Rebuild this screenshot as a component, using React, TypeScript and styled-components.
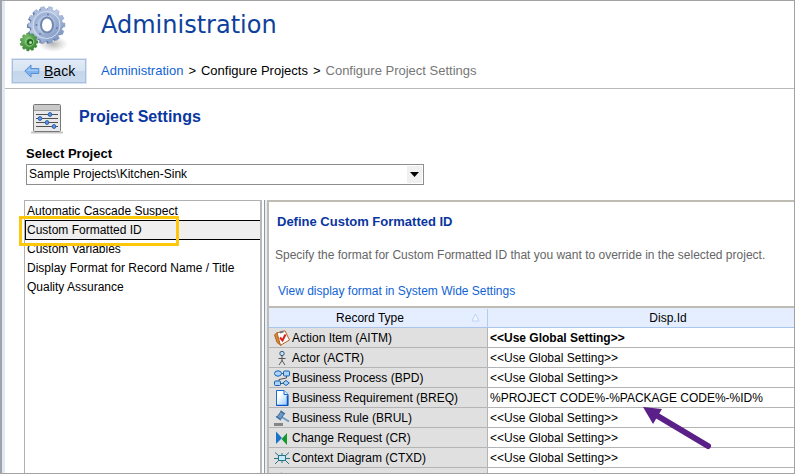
import React from 'react';
import styled, { createGlobalStyle } from 'styled-components';

const GlobalStyle = createGlobalStyle`
  * { box-sizing: border-box; }
  html, body { margin: 0; background: #fff; }
  body { font: 12px/16px "Liberation Sans", Arial, sans-serif; color: #000; }
`;

const Frame = styled.div`
  display: flex;
  flex-direction: column;
  height: 100vh;
  overflow: hidden;
  border: 1px solid #a2a2a2;
  border-left: 2px solid #a0a3a6;
`;
const Inner = styled.div`
  flex: 1;
  min-height: 0;
  display: flex;
  flex-direction: column;
  border-left: 3px solid #e2e9f6;
`;
const Header = styled.header`
  display: grid;
  grid-template-columns: 96px 1fr;
  grid-template-rows: 57px 30px;
  border-bottom: 1px solid #b9b9b9;
  flex: none;
`;
const Logo = styled.div`
  padding: 2px 0 0 12px;
  svg { display: block; }
`;
const Title = styled.h1`
  margin: 0;
  padding-top: 8px;
  font: 24px/32px "DejaVu Sans", Verdana, sans-serif;
  color: #0d419b;
`;
const BackCell = styled.div`
  padding-left: 6px;
`;
const BackButton = styled.button`
  display: flex;
  align-items: center;
  gap: 4px;
  width: 76px;
  height: 26px;
  padding: 0 0 0 12px;
  border: 1px solid #d9e5f3;
  outline: 1px solid #a9bfdb;
  outline-offset: -2px;
  background: linear-gradient(#e3ecf7, #d6e3f2 50%, #c5d6eb 51%, #cbdbee);
  color: #000;
  font: 14px/16px "Liberation Sans", Arial, sans-serif;
`;
const Breadcrumb = styled.nav`
  display: flex;
  gap: 5px;
  padding-top: 4px;
  font-size: 13px;
  line-height: 18px;
  white-space: nowrap;
`;
const Link = styled.a`
  color: #1064d6;
  text-decoration: none;
`;
const Muted = styled.span`
  color: #777;
`;
const Section = styled.section`
  flex: none;
  padding: 12px 20px 0 21px;
`;
const SectionHead = styled.div`
  display: flex;
  align-items: center;
  gap: 16px;
  height: 36px;
  padding-left: 5px;
`;
const SectionTitle = styled.h2`
  margin: 0 0 4px;
  font-size: 16px;
  line-height: 20px;
  color: #0a36a0;
`;
const SelectLabel = styled.label`
  display: block;
  padding-top: 8px;
  font-size: 13px;
  line-height: 18px;
  font-weight: bold;
`;
const SelectBox = styled.div`
  display: flex;
  align-items: center;
  width: 398px;
  max-width: 100%;
  height: 21px;
  margin-top: 1px;
  padding-right: 1px;
  border: 1px solid #8e8e8e;
`;
const Select = styled.select`
  flex: 1;
  height: 19px;
  padding: 0 2px 2px;
  border: 0;
  appearance: none;
  background: transparent;
  color: #000;
  font: 12px/16px "Liberation Sans", Arial, sans-serif;
`;
const SelectArrow = styled.span`
  display: flex;
  align-items: center;
  justify-content: center;
  width: 15px;
  height: 17px;
  background: #f0f0f0;
  pointer-events: none;
`;
const Body = styled.main`
  flex: 1;
  min-height: 0;
  display: flex;
  margin: 15px 0 0 19px;
`;
const List = styled.ul`
  flex: 0 0 236px;
  margin: 0;
  padding: 0;
  list-style: none;
  border: solid #b0b0b0;
  border-width: 1px 0 0 1px;
`;
const ListItem = styled.li`
  position: relative;
`;
const ListButton = styled.button<{ $active?: boolean }>`
  display: block;
  width: 100%;
  height: ${p => (p.$active ? 20 : 19)}px;
  margin-bottom: ${p => (p.$active ? -1 : 0)}px;
  padding: 0 0 0 ${p => (p.$active ? 1 : 2)}px;
  border: solid #000;
  border-width: ${p => (p.$active ? '1px 0 1px 1px' : '0')};
  background: ${p => (p.$active ? '#efefef' : 'transparent')};
  color: #000;
  text-align: left;
  white-space: nowrap;
  font: 12px/18px "Liberation Sans", Arial, sans-serif;
`;
const Highlight = styled.span`
  position: absolute;
  z-index: 1;
  left: -6px;
  top: -4px;
  width: 160px;
  height: 30px;
  border: 3px solid #fdc70c;
  pointer-events: none;
`;
const Splitter = styled.div`
  flex: 0 0 7px;
  border-left: 2px solid #b8b8b8;
  background: linear-gradient(90deg, #fff 0 2px, #8c9bab 2px 3px, #e8ecf2 3px);
`;
const Panel = styled.section`
  position: relative;
  flex: 1;
  min-width: 0;
  overflow: hidden;
  border: solid #bfbdb3;
  border-width: 2px 0 0 2px;
`;
const PanelText = styled.div`
  height: 104px;
  padding: 12px 6px 0;
  white-space: nowrap;
`;
const PanelTitle = styled.h3`
  margin: 0 0 17px 2px;
  font-size: 13px;
  line-height: 16px;
  color: #0a36a0;
`;
const Description = styled.p`
  margin: 0 0 19px;
  line-height: 17px;
  color: #666;
`;
const PanelLink = styled(Link)`
  margin-left: 3px;
`;
const Table = styled.table`
  width: 100%;
  table-layout: fixed;
  border-collapse: separate;
  border-spacing: 0;
  border-top: 2px solid #bfbdb3;
  col:first-child { width: 219px; }
`;
const HeadCell = styled.th<{ $pad: string }>`
  height: 20px;
  padding: ${p => p.$pad};
  border-bottom: 1px solid #a9c4ee;
  background: #e5eeff;
  font-weight: normal;
  line-height: 18px;
`;
const HeadRow = styled.div<{ $sorted?: boolean }>`
  display: flex;
  align-items: center;
  border-right: ${p => (p.$sorted ? '1px solid #b4cbf0' : '0')};
  svg { margin-right: 7px; }
`;
const HeadText = styled.span`
  flex: 1;
  text-align: center;
`;
const NameCell = styled.td`
  height: 20px;
  padding: 0;
  border: solid #b4b4b4;
  border-width: 0 1px 1px 0;
  background: #e0e0e0;
`;
const NameRow = styled.div`
  display: flex;
  align-items: center;
  gap: 2px;
  height: 19px;
  padding: 1px 0 0 5px;
  line-height: 16px;
  white-space: nowrap;
  svg { flex: none; }
`;
const ValueCell = styled.td<{ $bold?: boolean }>`
  height: 20px;
  padding: 0 0 0 2px;
  border-bottom: 1px solid #b4b4b4;
  font-weight: ${p => (p.$bold ? 'bold' : 'normal')};
  line-height: 16px;
  white-space: nowrap;
`;
const Pointer = styled.svg`
  position: absolute;
  left: 373px;
  top: 203px;
`;

function gearPath(cx: number, cy: number, outer: number, inner: number, teeth: number) {
  const pts: string[] = [];
  const step = (Math.PI * 2) / teeth;
  for (let i = 0; i < teeth; i++) {
    [[-0.32, inner], [-0.22, outer], [0.22, outer], [0.32, inner]].forEach(([offset, radius]) => {
      const a = (i + offset) * step;
      pts.push(`${(cx + Math.cos(a) * radius).toFixed(2)} ${(cy + Math.sin(a) * radius).toFixed(2)}`);
    });
  }
  return `M${pts.join('L')}Z`;
}

const Gears = () => (
  <svg width="52" height="52" viewBox="0 0 52 52" aria-hidden="true">
    <defs>
      <linearGradient id="blue" x1="0" y1="0" x2="1" y2="1">
        <stop offset="0" stopColor="#9fb3d8" /><stop offset=".45" stopColor="#bccbe6" /><stop offset="1" stopColor="#6583b5" />
      </linearGradient>
      <radialGradient id="green" cx=".4" cy=".3" r=".8">
        <stop offset="0" stopColor="#7cc06c" /><stop offset="1" stopColor="#2c7a29" />
      </radialGradient>
      <radialGradient id="shade"><stop offset="0" stopColor="#999" stopOpacity=".7" /><stop offset="1" stopColor="#aaa" stopOpacity="0" /></radialGradient>
    </defs>
    <ellipse cx="36" cy="41" rx="15" ry="8" fill="url(#shade)" />
    <path d={gearPath(28, 23, 18, 15.5, 14)} fill="#5c75a3" />
    <path d={gearPath(29.5, 22, 18.5, 16, 14)} fill="url(#blue)" stroke="#8296bd" strokeWidth=".5" />
    <circle cx="29.500" cy="22" r="13.500" fill="none" stroke="#d3def1" strokeWidth="1" />
    <circle cx="29.500" cy="22" r="11" fill="none" stroke="#8ca2c8" strokeWidth="3" opacity=".5" />
    <ellipse cx="30" cy="22" rx="6" ry="7.500" fill="#fff" stroke="#7188b1" strokeWidth="2" />
    <circle cx="19.500" cy="22" r="1" fill="#647eac" /><circle cx="31" cy="11.500" r="1" fill="#647eac" />
    <circle cx="23" cy="31" r="1" fill="#647eac" /><circle cx="40" cy="25" r="1" fill="#647eac" />
    <path d={gearPath(12, 39, 9, 7.5, 11)} fill="url(#green)" stroke="#3b8a36" strokeWidth=".5" />
    <circle cx="12.500" cy="39" r="4.200" fill="none" stroke="#8dcb7e" strokeWidth="1" />
    <circle cx="13" cy="39" r="3" fill="#256a24" />
    <circle cx="13.500" cy="39.500" r="1.500" fill="#b5deaa" />
  </svg>
);

const BackArrow = () => (
  <svg width="16" height="14" viewBox="0 0 16 14" aria-hidden="true">
    <path d="M.8 7 7 .9v3.600h7.800v5H7v3.600Z" fill="#7fb3f0" stroke="#5a90d2" />
    <path d="M2.600 7 6 3.600V5.500h7.800V7Z" fill="#a3cbf8" />
  </svg>
);

const SettingsIcon = () => (
  <svg width="32" height="30" viewBox="0 0 32 30" aria-hidden="true">
    <path d="M0 28.500h32" stroke="#c6c6c6" strokeWidth="2" />
    <rect x="2.500" y=".5" width="27" height="27" rx="1" fill="#e9e9e9" stroke="#777" />
    <rect x="3" y="1" width="26" height="5" fill="#c9c9c9" />
    <path d="M3 6.500h26" stroke="#9b9b9b" />
    <path d="M5 10.500h22M5 14.500h22M5 18.500h22M5 22.500h22" stroke="#505050" />
    <g fill="#5f94de" stroke="#2d5fae">
      <circle cx="19" cy="10.500" r="1.900" /><circle cx="9" cy="14.500" r="1.900" />
      <circle cx="16" cy="18.500" r="1.900" /><circle cx="23" cy="22.500" r="1.900" />
    </g>
  </svg>
);

const icons: Record<string, React.ReactNode> = {
  action: (
    <>
      <path d="M.5 5 3.500 2 7 15.500 3 12.500Z" fill="#d9852f" stroke="#9c4f14" strokeWidth=".7" />
      <path d="M3 3 11 .8 15.500 10 6.500 15.300Z" fill="#fff" stroke="#b8601c" strokeWidth="1" />
      <path d="M5.500 1.500 9 .5 9.700 2.500 6.200 3.500Z" fill="#777" />
      <path d="M6 7.500 8.500 10.500 11.500 4.500" fill="none" stroke="#d9201a" strokeWidth="2" />
    </>
  ),
  actor: (
    <>
      <circle cx="8" cy="3.500" r="2.200" fill="#bfe0fa" stroke="#44596c" />
      <path d="M8 6v5M4.500 8.500h7M8 10.500 5 15M8 10.500l3 4.500" fill="none" stroke="#555" />
    </>
  ),
  process: (
    <g fill="#a9d3fa" stroke="#1762ae">
      <path d="M7 3.500h3M12.500 6v2L5 9.500V12M7 13.500h2" fill="none" stroke="#555" />
      <ellipse cx="4" cy="3.500" rx="3.500" ry="2.700" /><rect x="9.500" y="1" width="6" height="5" rx="1" />
      <rect x=".5" y="11" width="6" height="4.500" rx="1" />
      <path d="M12 10.500 15.300 13 12 15.500 8.700 13Z" />
    </g>
  ),
  page: (
    <>
      <path d="M2.500 .5h7.500l4 4v11h-11.500Z" fill="url(#sheet)" stroke="#146cd4" />
      <path d="M10 .5v4h4" fill="#d4eafd" stroke="#146cd4" />
      <path d="M13.500 5.500v10h-11" fill="none" stroke="#0b55c8" strokeWidth="1.500" />
    </>
  ),
  rule: (
    <>
      <path d="M6 6 15 11.500" stroke="#6f9cc4" strokeWidth="2" />
      <path d="M7 1.500 10 4 6.500 9.500 3 7Z" fill="#6d98c2" stroke="#3f6e9d" />
      <path d="M6.500 .8 11 4M2 6.500 7 10" stroke="#416f9e" strokeWidth="1.500" />
      <rect x="0" y="13" width="9" height="3" fill="#858585" />
    </>
  ),
  change: (
    <>
      <path d="M2 1.500 8 8 2 14Z" fill="#1873cc" />
      <path d="M13 3v12L7.500 9Z" fill="#14992e" />
    </>
  ),
  context: (
    <>
      <path d="M1 2.500 5 6M15 2.500 11 6M1 14 5 10M15 14l-4-4M8 3v3M8 10v3M0 8.500h4M12 8.500h4" fill="none" stroke="#287480" />
      <rect x="4.500" y="5.500" width="7" height="5" fill="#c4e9f8" stroke="#277486" />
    </>
  ),
  partial: <path d="M5 5 7.500 3" stroke="#444" />,
};

const Icon = ({ name }: { name: string }) => (
  <svg width="16" height="16" viewBox="0 0 16 16" aria-hidden="true">
    <defs>
      <linearGradient id="sheet" x1="0" y1="0" x2="1" y2="1">
        <stop offset=".3" stopColor="#fff" /><stop offset="1" stopColor="#8cc5fb" />
      </linearGradient>
    </defs>
    {icons[name]}
  </svg>
);

const settings = [
  'Automatic Cascade Suspect',
  'Custom Formatted ID',
  'Custom Variables',
  'Display Format for Record Name / Title',
  'Quality Assurance',
];

const GLOBAL = '<<Use Global Setting>>';
const records = [
  { icon: 'action', name: 'Action Item (AITM)', value: GLOBAL, bold: true },
  { icon: 'actor', name: 'Actor (ACTR)', value: GLOBAL },
  { icon: 'process', name: 'Business Process (BPD)', value: GLOBAL },
  { icon: 'page', name: 'Business Requirement (BREQ)', value: '%PROJECT CODE%-%PACKAGE CODE%-%ID%' },
  { icon: 'rule', name: 'Business Rule (BRUL)', value: GLOBAL },
  { icon: 'change', name: 'Change Request (CR)', value: GLOBAL },
  { icon: 'context', name: 'Context Diagram (CTXD)', value: GLOBAL },
  { icon: 'partial', name: '', value: '' },
];

export default function App() {
  return (
    <>
      <GlobalStyle />
      <Frame>
        <Inner>
          <Header>
            <Logo><Gears /></Logo>
            <Title>Administration</Title>
            <BackCell>
              <BackButton type="button" accessKey="b"><BackArrow /><span><u>B</u>ack</span></BackButton>
            </BackCell>
            <Breadcrumb aria-label="Breadcrumb">
              <Link href="#administration">Administration</Link>
              <span>&gt;</span>
              <span>Configure Projects</span>
              <span>&gt;</span>
              <Muted>Configure Project Settings</Muted>
            </Breadcrumb>
          </Header>
          <Section>
            <SectionHead>
              <SettingsIcon />
              <SectionTitle>Project Settings</SectionTitle>
            </SectionHead>
            <SelectLabel htmlFor="project">Select Project</SelectLabel>
            <SelectBox>
              <Select id="project"><option>Sample Projects\Kitchen-Sink</option></Select>
              <SelectArrow>
                <svg width="9" height="5" viewBox="0 0 9 5" aria-hidden="true"><path d="M0 0h9L4.500 5Z" /></svg>
              </SelectArrow>
            </SelectBox>
          </Section>
          <Body>
            <List>
              {settings.map((label, i) => (
                <ListItem key={label}>
                  <ListButton type="button" $active={i === 1}>{label}</ListButton>
                  {i === 1 && <Highlight />}
                </ListItem>
              ))}
            </List>
            <Splitter />
            <Panel>
              <PanelText>
                <PanelTitle>Define Custom Formatted ID</PanelTitle>
                <Description>
                  Specify the format for Custom Formatted ID that you want to override in the selected project.
                </Description>
                <PanelLink href="#system">View display format in System Wide Settings</PanelLink>
              </PanelText>
              <Table>
                <colgroup><col /><col /></colgroup>
                <thead>
                  <tr>
                    <HeadCell $pad="0">
                      <HeadRow $sorted>
                        <HeadText>Record Type</HeadText>
                        <svg width="9" height="9" viewBox="0 0 9 9" aria-hidden="true">
                          <path d="M4.500 1 8 8H1Z" fill="#f2f6fe" stroke="#bcd2f4" />
                        </svg>
                      </HeadRow>
                    </HeadCell>
                    <HeadCell $pad="0 0 0 54px">Disp.Id</HeadCell>
                  </tr>
                </thead>
                <tbody>
                  {records.map(r => (
                    <tr key={r.icon}>
                      <NameCell><NameRow><Icon name={r.icon} />{r.name}</NameRow></NameCell>
                      <ValueCell $bold={r.bold}>{r.value}</ValueCell>
                    </tr>
                  ))}
                </tbody>
              </Table>
              <Pointer width="72" height="50" viewBox="0 0 72 50" aria-hidden="true">
                <path d="M14 10 66 41" stroke="#5b1f88" strokeWidth="6" strokeLinecap="round" />
                <path d="M1 2 20 4 11 19Z" fill="#5b1f88" />
              </Pointer>
            </Panel>
          </Body>
        </Inner>
      </Frame>
    </>
  );
}
